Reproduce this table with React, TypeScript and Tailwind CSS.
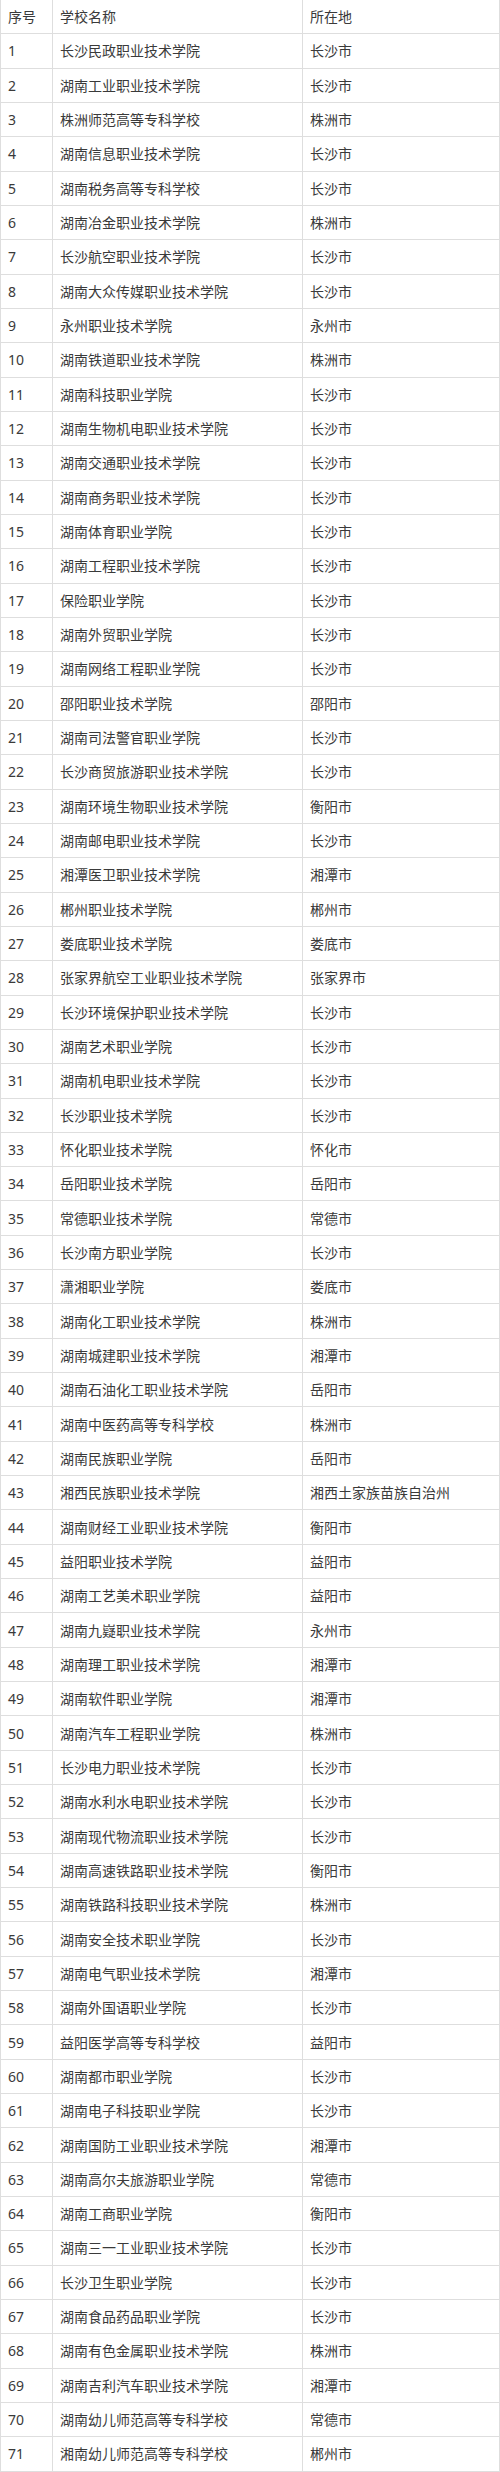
import React from 'react';

const rows: [string, string][] = [
  ['长沙民政职业技术学院', '长沙市'],
  ['湖南工业职业技术学院', '长沙市'],
  ['株洲师范高等专科学校', '株洲市'],
  ['湖南信息职业技术学院', '长沙市'],
  ['湖南税务高等专科学校', '长沙市'],
  ['湖南冶金职业技术学院', '株洲市'],
  ['长沙航空职业技术学院', '长沙市'],
  ['湖南大众传媒职业技术学院', '长沙市'],
  ['永州职业技术学院', '永州市'],
  ['湖南铁道职业技术学院', '株洲市'],
  ['湖南科技职业学院', '长沙市'],
  ['湖南生物机电职业技术学院', '长沙市'],
  ['湖南交通职业技术学院', '长沙市'],
  ['湖南商务职业技术学院', '长沙市'],
  ['湖南体育职业学院', '长沙市'],
  ['湖南工程职业技术学院', '长沙市'],
  ['保险职业学院', '长沙市'],
  ['湖南外贸职业学院', '长沙市'],
  ['湖南网络工程职业学院', '长沙市'],
  ['邵阳职业技术学院', '邵阳市'],
  ['湖南司法警官职业学院', '长沙市'],
  ['长沙商贸旅游职业技术学院', '长沙市'],
  ['湖南环境生物职业技术学院', '衡阳市'],
  ['湖南邮电职业技术学院', '长沙市'],
  ['湘潭医卫职业技术学院', '湘潭市'],
  ['郴州职业技术学院', '郴州市'],
  ['娄底职业技术学院', '娄底市'],
  ['张家界航空工业职业技术学院', '张家界市'],
  ['长沙环境保护职业技术学院', '长沙市'],
  ['湖南艺术职业学院', '长沙市'],
  ['湖南机电职业技术学院', '长沙市'],
  ['长沙职业技术学院', '长沙市'],
  ['怀化职业技术学院', '怀化市'],
  ['岳阳职业技术学院', '岳阳市'],
  ['常德职业技术学院', '常德市'],
  ['长沙南方职业学院', '长沙市'],
  ['潇湘职业学院', '娄底市'],
  ['湖南化工职业技术学院', '株洲市'],
  ['湖南城建职业技术学院', '湘潭市'],
  ['湖南石油化工职业技术学院', '岳阳市'],
  ['湖南中医药高等专科学校', '株洲市'],
  ['湖南民族职业学院', '岳阳市'],
  ['湘西民族职业技术学院', '湘西土家族苗族自治州'],
  ['湖南财经工业职业技术学院', '衡阳市'],
  ['益阳职业技术学院', '益阳市'],
  ['湖南工艺美术职业学院', '益阳市'],
  ['湖南九嶷职业技术学院', '永州市'],
  ['湖南理工职业技术学院', '湘潭市'],
  ['湖南软件职业学院', '湘潭市'],
  ['湖南汽车工程职业学院', '株洲市'],
  ['长沙电力职业技术学院', '长沙市'],
  ['湖南水利水电职业技术学院', '长沙市'],
  ['湖南现代物流职业技术学院', '长沙市'],
  ['湖南高速铁路职业技术学院', '衡阳市'],
  ['湖南铁路科技职业技术学院', '株洲市'],
  ['湖南安全技术职业学院', '长沙市'],
  ['湖南电气职业技术学院', '湘潭市'],
  ['湖南外国语职业学院', '长沙市'],
  ['益阳医学高等专科学校', '益阳市'],
  ['湖南都市职业学院', '长沙市'],
  ['湖南电子科技职业学院', '长沙市'],
  ['湖南国防工业职业技术学院', '湘潭市'],
  ['湖南高尔夫旅游职业学院', '常德市'],
  ['湖南工商职业学院', '衡阳市'],
  ['湖南三一工业职业技术学院', '长沙市'],
  ['长沙卫生职业学院', '长沙市'],
  ['湖南食品药品职业学院', '长沙市'],
  ['湖南有色金属职业技术学院', '株洲市'],
  ['湖南吉利汽车职业技术学院', '湘潭市'],
  ['湖南幼儿师范高等专科学校', '常德市'],
  ['湘南幼儿师范高等专科学校', '郴州市'],
];

const cell = 'flex items-center border-r border-b border-[#dedede] px-[7px] whitespace-nowrap overflow-hidden';

export default function App() {
  return (
    <div className="w-[500px] bg-white text-[14px] text-[#3a3a3a] font-['Noto_Sans','Noto_Sans_CJK_SC',sans-serif]">
      <div className="grid grid-cols-[52px_250px_1fr] auto-rows-[34.333px] border-l border-[#dedede]">
        <div className={cell}>序号</div>
        <div className={cell}>学校名称</div>
        <div className={cell}>所在地</div>
        {rows.map(([name, city], i) => (
          <React.Fragment key={i}>
            <div className={cell}>{i + 1}</div>
            <div className={cell}>{name}</div>
            <div className={cell}>{city}</div>
          </React.Fragment>
        ))}
      </div>
    </div>
  );
}
